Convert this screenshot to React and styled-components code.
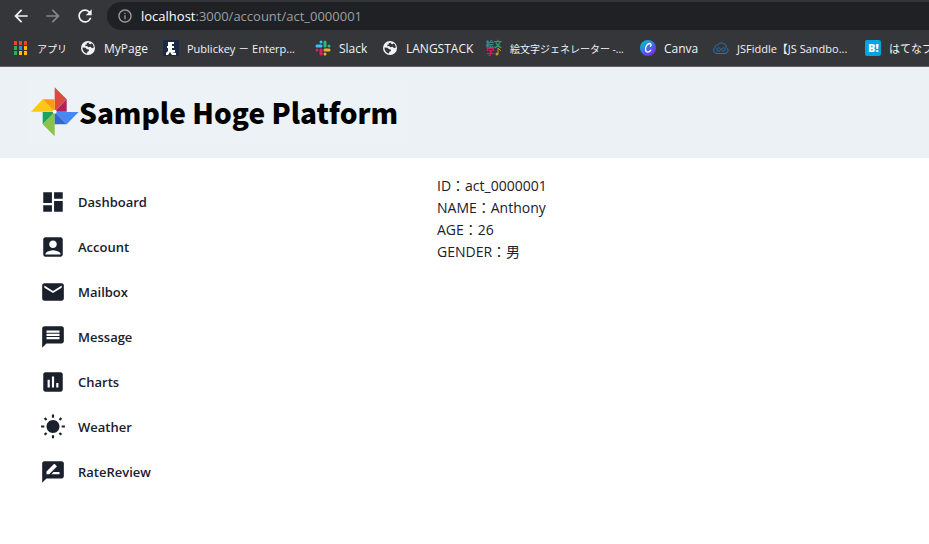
import React from 'react'
import styled, { createGlobalStyle } from 'styled-components';
import {
  MdArrowBack,
  MdArrowForward,
  MdRefresh,
  MdInfoOutline,
  MdDashboard,
  MdAccountBox,
  MdEmail,
  MdMessage,
  MdInsertChart,
  MdWbSunny,
  MdRateReview,
} from 'react-icons/md';

const menus = [
  { name: 'Dashboard', Icon: MdDashboard },
  { name: 'Account', Icon: MdAccountBox },
  { name: 'Mailbox', Icon: MdEmail },
  { name: 'Message', Icon: MdMessage },
  { name: 'Charts', Icon: MdInsertChart },
  { name: 'Weather', Icon: MdWbSunny },
  { name: 'RateReview', Icon: MdRateReview },
]

const bookmarks = [
  { name: 'アプリ', Icon: AppsIcon, size: 10 },
  { name: 'MyPage', Icon: GlobeIcon },
  { name: 'Publickey － Enterp...', Icon: PublickeyIcon, size: 11 },
  { name: 'Slack', Icon: SlackIcon },
  { name: 'LANGSTACK', Icon: GlobeIcon },
  { name: '絵文字ジェネレーター -...', Icon: EmojiIcon, size: 10 },
  { name: 'Canva', Icon: CanvaIcon },
  { name: 'JSFiddle【JS Sandbo...', Icon: FiddleIcon, size: 11 },
  { name: 'はてなブ', Icon: HatenaIcon, size: 11 },
]

export default function App() {
  return (
    <>
      <GlobalStyle />
      <Browser>
        <Toolbar>
          <ToolButton type="button" aria-label="戻る"><MdArrowBack /></ToolButton>
          <ToolButton type="button" aria-label="進む" disabled><MdArrowForward /></ToolButton>
          <ToolButton type="button" aria-label="再読み込み"><MdRefresh /></ToolButton>
          <AddressBar>
            <MdInfoOutline />
            <p><strong>localhost</strong>:3000/account/act_0000001</p>
          </AddressBar>
        </Toolbar>
        <Bookmarks>
          {bookmarks.map(({ name, Icon, size = 12 }) => (
            <Bookmark href="#" key={name} $size={size}>
              <Icon />
              <span>{name}</span>
            </Bookmark>
          ))}
        </Bookmarks>
      </Browser>
      <Header>
        <Logo href="#">
          <Pinwheel />
          Sample Hoge Platform
        </Logo>
      </Header>
      <Container>
        <Nav>
          {menus.map(({ name, Icon }) => (
            <NavLink href="#" key={name}>
              <Icon />
              {name}
            </NavLink>
          ))}
        </Nav>
        <Profile>
          <p>ID：act_0000001</p>
          <p>NAME：Anthony</p>
          <p>AGE：26</p>
          <p>GENDER：男</p>
        </Profile>
      </Container>
    </>
  )
}

function Pinwheel() {
  return (
    <svg viewBox="0 0 144 148" aria-hidden="true">
      <path d="M71 0l36 36-36 37z" fill="#dd4b3e" />
      <path d="M107 36v37H71z" fill="#b0215e" />
      <path d="M0 73l35-37 36 37z" fill="#ffc61a" />
      <path d="M35 36h36v37z" fill="#fb9a14" />
      <path d="M71 147l-36-36 36-37z" fill="#8bc34a" />
      <path d="M35 74h36l-36 37z" fill="#1fa15f" />
      <path d="M143 74l-36 37-36-37z" fill="#4688f4" />
      <path d="M71 74l36 37H71z" fill="#3765d0" />
      <circle cx="71" cy="73" r="6" fill="#fff" />
    </svg>
  )
}

function AppsIcon() {
  const colors = ['#ea4335', '#ea4335', '#ea4335', '#34a853', '#2b8cf0', '#fbbc05', '#34a853', '#fbbc05', '#fbbc05']
  return (
    <svg viewBox="0 0 16 16" aria-hidden="true">
      {colors.map((color, i) => (
        <rect key={i} x={1 + (i % 3) * 5} y={1 + Math.floor(i / 3) * 5} width="3" height="4" fill={color} />
      ))}
    </svg>
  )
}

function GlobeIcon() {
  return (
    <svg viewBox="0 0 16 16" aria-hidden="true">
      <circle cx="8" cy="8" r="7" fill="#f1f3f4" />
      <path d="M2.500 7.500l3 .2 1.500 1.500h1.500l.6 1.800-1.500.6-.7 1.900C4.500 13 2.300 10.500 2.500 7.500z" fill="#35363a" />
      <path d="M6.500 3.200l2.800-.7-.5 1.300 1.700.4 1.300-1c1.400 1.200 2 2.600 1.900 4.600l-1.700.5-1.300-1.600-2.200.5-1.500-1.300-1.700.3.2-1.600 1.500-.2z" fill="#35363a" />
    </svg>
  )
}

function PublickeyIcon() {
  return (
    <svg viewBox="0 0 16 16" aria-hidden="true">
      <path d="M0 0h16v16H0z" fill="#1b2a41" />
      <path d="M5 2h6v2H9v2h2v2H9v2h3v2H9l4 1v2H9l-2-3-2 3H3v-2l2-2V8H4V6h1z" fill="#fff" />
    </svg>
  )
}

function SlackIcon() {
  return (
    <svg viewBox="0 0 16 16" fill="none" strokeWidth="3" strokeLinecap="round" aria-hidden="true">
      <path d="M2 6h4M6 2v0" stroke="#36c5f0" />
      <path d="M10 2v4M14 6v0" stroke="#2eb67d" />
      <path d="M10 10h4M10 14v0" stroke="#ecb22e" />
      <path d="M6 10v4M2 10v0" stroke="#e01e5a" />
    </svg>
  )
}

function EmojiIcon() {
  return (
    <svg viewBox="0 0 16 16" fontSize="8" fontWeight="700" overflow="visible" aria-hidden="true">
      <text x="0" y="7" fill="#3a8f9c">絵</text>
      <text x="8" y="7" fill="#2f9e77">文</text>
      <text x="0" y="15" fill="#d81b60">字</text>
      <path d="M12 8v6M12 8l3 3" stroke="#c9922e" fill="none" />
      <circle cx="11" cy="14" r="1.500" fill="#c9922e" />
    </svg>
  )
}

function CanvaIcon() {
  return (
    <svg viewBox="0 0 16 16" aria-hidden="true">
      <defs>
        <linearGradient id="canva" x1="0" y1="0" x2="0.8" y2="1">
          <stop offset="0.1" stopColor="#00c4cc" />
          <stop offset="0.6" stopColor="#4a5fe8" />
          <stop offset="1" stopColor="#7d2ae8" />
        </linearGradient>
      </defs>
      <circle cx="8" cy="8" r="8" fill="url(#canva)" />
      <path d="M10.500 6.300c1-1.300.6-2.800-.8-2.800-2.300 0-4.300 3.200-4.200 5.800.1 3.600 3.500 3.600 5.300.8" fill="none" stroke="#fff" strokeWidth="1.300" strokeLinecap="round" />
    </svg>
  )
}

function FiddleIcon() {
  return (
    <svg viewBox="0 0 16 16" fill="none" stroke="#2a73b8" aria-hidden="true">
      <path d="M4 13.500a3.300 3.300 0 0 1-2-6 2.200 2.200 0 0 1 2.500-2.600 5 5 0 0 1 9 2.800 3.100 3.100 0 0 1-1.500 5.800z" />
      <path d="M8 9.500C7 8.200 6.300 7.800 5.500 7.800a1.700 1.700 0 0 0 0 3.400c2 0 3-3.400 5-3.400a1.700 1.700 0 0 1 0 3.400c-.8 0-1.500-.4-2.500-1.700" />
    </svg>
  )
}

function HatenaIcon() {
  return (
    <svg viewBox="0 0 16 16" aria-hidden="true">
      <rect width="16" height="16" rx="2" fill="#00a4de" />
      <text x="3" y="12" fill="#fff" fontSize="11" fontWeight="800">B!</text>
    </svg>
  )
}

const GlobalStyle = createGlobalStyle`
  * {
    box-sizing: border-box;
  }
  body {
    margin: 0;
    background-color: #fff;
    color: #1a202c;
    font-family: "Open Sans", "Noto Sans CJK JP", sans-serif;
    font-size: 14px;
    overflow-x: hidden;
  }
  p {
    margin: 0;
  }
  a {
    color: inherit;
    text-decoration: none;
  }
`

const Browser = styled.div`
  background-color: #35363a;
  border-bottom: 1px solid #5f6064;
  color: #f1f3f4;
  overflow: hidden;
`

const Toolbar = styled.div`
  display: flex;
  align-items: center;
  gap: 12px;
  padding: 2px 0 0 11px;
`

const ToolButton = styled.button`
  display: flex;
  padding: 0;
  border: none;
  background: none;
  color: ${({ disabled }) => (disabled ? '#85868a' : '#f1f3f4')};
  font-size: 20px;
`

const AddressBar = styled.div`
  flex: 1;
  display: flex;
  align-items: center;
  gap: 8px;
  height: 28px;
  padding-left: 10px;
  border-radius: 14px 0 0 14px;
  background-color: #202124;
  color: #9aa0a6;
  font-size: 13px;
  svg {
    width: 16px;
    height: 16px;
  }
  strong {
    font-weight: 400;
    color: #fff;
  }
`

const Bookmarks = styled.nav`
  display: grid;
  grid-template-columns: 67px 83px 152px 67px 104px 154px 73px 152px 152px;
  align-items: center;
  height: 36px;
  padding-left: 13px;
`

const Bookmark = styled.a`
  display: flex;
  align-items: center;
  gap: 8px;
  font-size: ${({ $size }) => $size}px;
  white-space: nowrap;
  svg {
    flex: none;
    width: 16px;
    height: 16px;
  }
`

const Header = styled.header`
  padding: 13px 27px 14px;
  background-color: #ebf1f5;
`

const Logo = styled.a`
  display: inline-flex;
  align-items: center;
  height: 64px;
  padding: 0 10px 0 4px;
  background-color: #edf2f7;
  color: #000;
  font-family: "Noto Sans CJK JP", sans-serif;
  font-size: 28px;
  font-weight: 900;
  vertical-align: top;
  svg {
    width: 48px;
    height: 50px;
  }
`

const Container = styled.div`
  display: flex;
  padding: 17px 40px;
`

const Nav = styled.nav`
  flex: 0 0 397px;
  padding-top: 4px;
`

const NavLink = styled.a`
  display: flex;
  align-items: center;
  gap: 12px;
  height: 45px;
  font-size: 13px;
  font-weight: 600;
  svg {
    width: 26px;
    height: 26px;
  }
`

const Profile = styled.main`
  flex: 1;
  line-height: 22px;
`
